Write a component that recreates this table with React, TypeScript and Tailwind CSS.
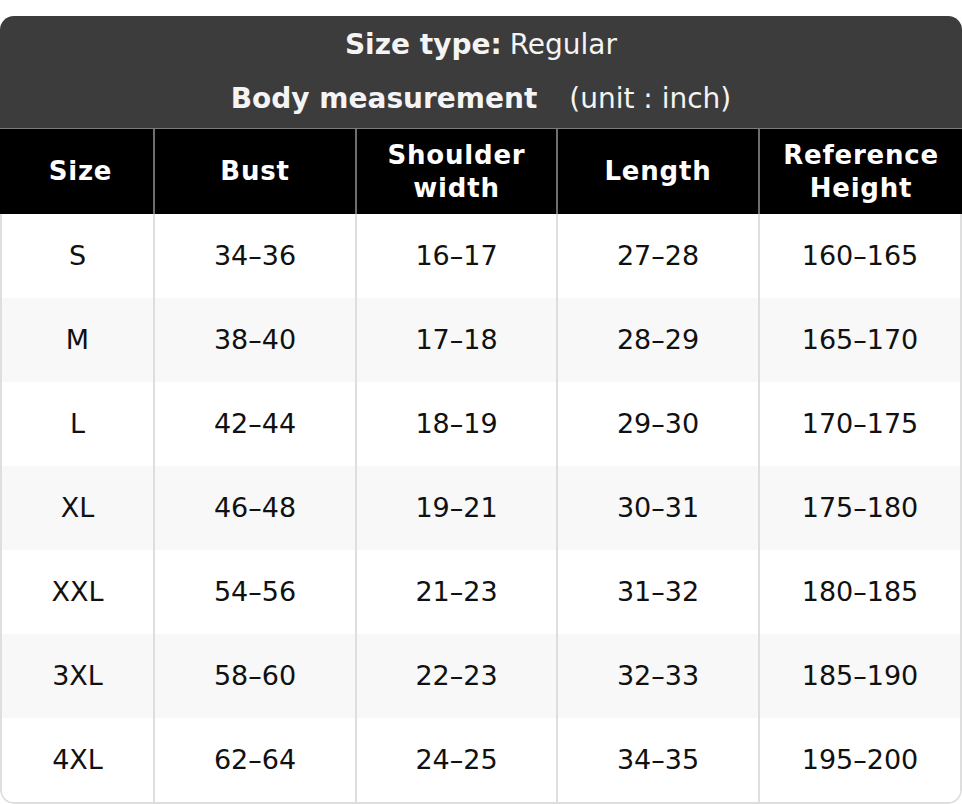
const cols = ["Size", "Bust", "Shoulder width", "Length", "Reference Height"];

const rows = [
  ["S", "34–36", "16–17", "27–28", "160–165"],
  ["M", "38–40", "17–18", "28–29", "165–170"],
  ["L", "42–44", "18–19", "29–30", "170–175"],
  ["XL", "46–48", "19–21", "30–31", "175–180"],
  ["XXL", "54–56", "21–23", "31–32", "180–185"],
  ["3XL", "58–60", "22–23", "32–33", "185–190"],
  ["4XL", "62–64", "24–25", "34–35", "195–200"],
];

export default function App() {
  return (
    <div className="w-[962px] bg-white pt-4 font-['DejaVu_Sans',sans-serif]">
      <div className="rounded-[14px] overflow-hidden">
        {/* title */}
        <div className="bg-[#3c3c3c] text-[#f4f4f4] text-[28px] border-b border-[#7a7a7a]">
          <div className="h-[57px] flex items-center justify-center">
            <span className="font-bold">Size type:</span>
            <span className="ml-2">Regular</span>
          </div>
          <div className="h-[55px] flex items-center justify-center pb-1">
            <span className="font-bold">Body measurement</span>
            <span className="ml-8">(unit : inch)</span>
          </div>
        </div>

        {/* header row */}
        <div className="grid grid-cols-[153px_202px_201px_202px_minmax(0,1fr)] bg-black text-white h-[85px]">
          {cols.map((c, i) => (
            <div
              key={c}
              className={
                "flex items-center justify-center text-center font-bold text-[26px] leading-[33px] tracking-[0.03em] px-4 " +
                (i > 0 ? "border-l-2 border-[#6e6e6e]" : "pl-6")
              }
            >
              {c}
            </div>
          ))}
        </div>

        {/* body */}
        <div className="border-x-2 border-b-2 border-[#dedede] rounded-b-[14px] overflow-hidden">
          {rows.map((r, ri) => (
            <div
              key={r[0]}
              className={
                "grid grid-cols-[151px_202px_201px_202px_minmax(0,1fr)] h-[84px] text-[27px] text-[#111] " +
                (ri % 2 === 1 ? "bg-[#f8f8f8]" : "bg-white")
              }
            >
              {r.map((v, ci) => (
                <div
                  key={ci}
                  className={
                    "flex items-center justify-center " +
                    (ci > 0 ? "border-l-2 border-[#dedede]" : "")
                  }
                >
                  {v}
                </div>
              ))}
            </div>
          ))}
        </div>
      </div>
    </div>
  );
}
